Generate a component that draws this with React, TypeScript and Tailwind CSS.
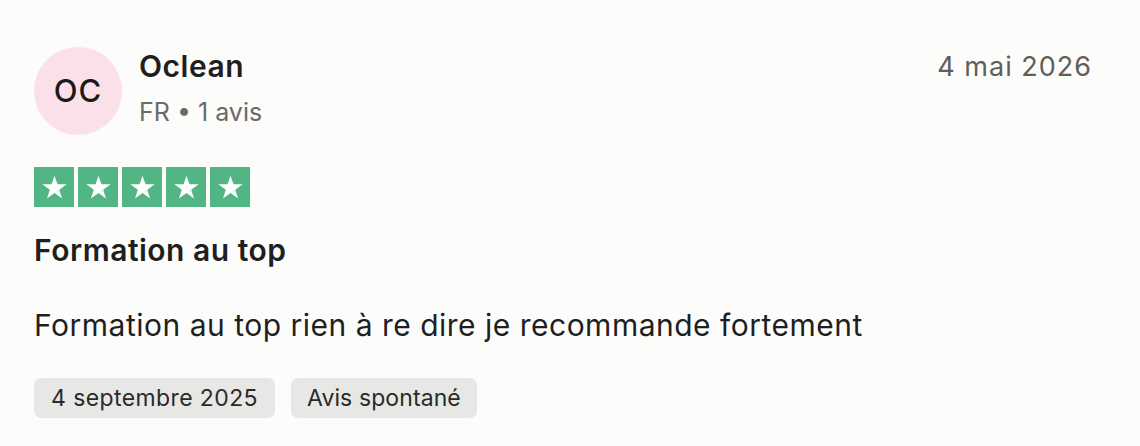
import React from "react";

function Star() {
  return (
    <svg viewBox="0 0 24 24" className="w-[29px] h-[29px]" aria-hidden>
      <path
        fill="#ffffff"
        d="M12 2.2l2.45 7.2h7.6l-6.15 4.45 2.35 7.25L12 16.6l-6.25 4.5 2.35-7.25L1.95 9.4h7.6z"
      />
      <path fill="#d7eee2" d="M15.9 13.85l0.55 1.75L12 16.6z" />
    </svg>
  );
}

export default function App() {
  return (
    <div
      className="w-[1140px] h-[446px] bg-[#fcfcfb] text-[#1c1c1c] px-[34px] pt-[47px]"
      style={{ fontFamily: "Inter, 'Noto Sans', sans-serif" }}
    >
      <div className="flex items-start justify-between">
        <div className="flex items-center gap-[17px]">
          <div className="w-[88px] h-[88px] rounded-full bg-[#fbe0ea] flex items-center justify-center text-[31px] font-medium text-[#1a1a1a] tracking-[1px]">
            OC
          </div>
          <div className="flex flex-col -mt-[8px]">
            <div className="text-[30px] font-semibold leading-[40px] text-[#1f1f1f] tracking-[0.5px]">Oclean</div>
            <div className="text-[25px] leading-[32px] text-[#6b6a66] mt-[10px]">FR • 1 avis</div>
          </div>
        </div>
        <div className="text-[27px] leading-[36px] text-[#5f5e5a] mt-[2px] mr-[14px] tracking-[1px]">4 mai 2026</div>
      </div>

      <div className="flex gap-[4px] mt-[32px]">
        {[0, 1, 2, 3, 4].map((i) => (
          <div key={i} className="w-[40px] h-[40px] bg-[#52b584] flex items-center justify-center">
            <Star />
          </div>
        ))}
      </div>

      <div className="text-[30px] font-semibold leading-[40px] mt-[23px] text-[#1f1f1f] tracking-[0.5px]">Formation au top</div>

      <div className="text-[30px] leading-[40px] mt-[35px] text-[#1f1f1f] tracking-[0.5px]">
        Formation au top rien à re dire je recommande fortement
      </div>

      <div className="flex gap-[16px] mt-[33px]">
        <div className="h-[40px] px-[17px] rounded-[7px] bg-[#e7e7e5] flex items-center text-[23px] text-[#2a2a2a] tracking-[0.4px]">
          4 septembre 2025
        </div>
        <div className="h-[40px] px-[16px] rounded-[7px] bg-[#e7e7e5] flex items-center text-[23px] text-[#2a2a2a] tracking-[0.1px]">
          Avis spontané
        </div>
      </div>
    </div>
  );
}
